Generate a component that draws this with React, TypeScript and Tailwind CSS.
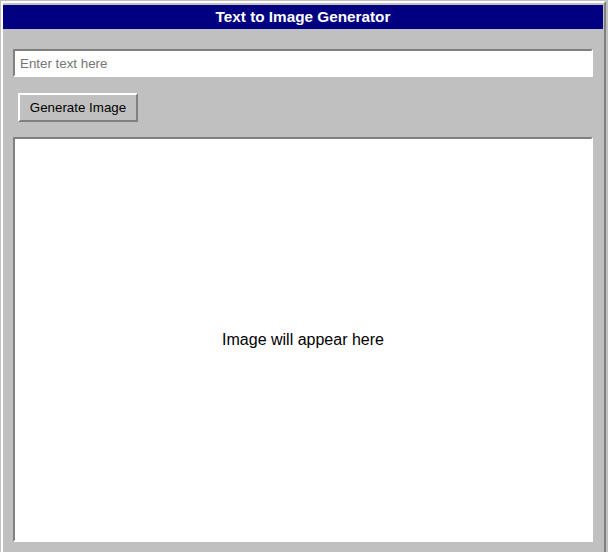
import React from "react";

export default function App() {
  return (
    <div
      className="w-[608px] h-[552px] overflow-hidden bg-[#c0c0c0] p-px"
      style={{ fontFamily: '"Liberation Sans", Arial, sans-serif' }}
    >
      <div className="w-[605px] border-2 border-t-white border-l-white border-r-[#808080] border-b-[#808080] bg-[#c0c0c0]">
        <div className="mt-[2px] mr-px h-6 bg-[#000080] flex items-center justify-center text-white font-bold text-[15.3px]">
          Text to Image Generator
        </div>
        <div className="pt-5 pl-[10px] pr-[11px] pb-[16px] flex flex-col">
          <input
            type="text"
            placeholder="Enter text here"
            className="w-[580px] h-[28px] border-2 border-t-[#808080] border-l-[#808080] border-r-white border-b-white bg-white px-[5px] text-[13.333px] text-black placeholder:text-[#757575] outline-none"
          />
          <button className="mt-4 ml-[5px] w-[120px] h-[29px] border-2 border-t-white border-l-white border-r-[#808080] border-b-[#808080] bg-[#c0c0c0] text-[13.333px] text-black">
            Generate Image
          </button>
          <div className="mt-[15px] w-[580px] h-[405px] border-2 border-t-[#808080] border-l-[#808080] border-r-white border-b-white bg-white flex items-center justify-center text-[16px] text-black">
            Image will appear here
          </div>
        </div>
      </div>
    </div>
  );
}
